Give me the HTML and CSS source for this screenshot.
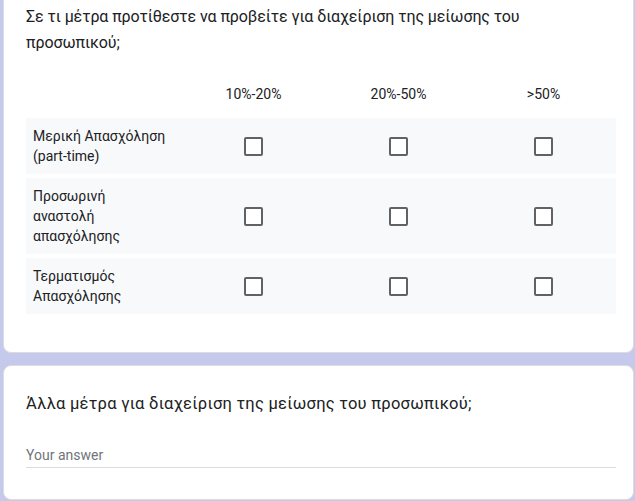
FILE: index.html
```html
<!DOCTYPE html>
<html lang="el">
<head>
<meta charset="utf-8">
<title>Form</title>
<link rel="stylesheet" href="styles.css">
</head>
<body>
<div class="card card-top">
  <div class="q-title">Σε τι μέτρα προτίθεστε να προβείτε για διαχείριση της μείωσης του προσωπικού;</div>
  <div class="grid">
    <div class="grid-head">
      <div></div>
      <div class="col-label">10%-20%</div>
      <div class="col-label">20%-50%</div>
      <div class="col-label">&gt;50%</div>
    </div>
    <div class="grid-row">
      <div class="row-label">Μερική Απασχόληση (part-time)</div>
      <div class="cell"><span class="box"></span></div>
      <div class="cell"><span class="box"></span></div>
      <div class="cell"><span class="box"></span></div>
    </div>
    <div class="grid-row">
      <div class="row-label">Προσωρινή αναστολή απασχόλησης</div>
      <div class="cell"><span class="box"></span></div>
      <div class="cell"><span class="box"></span></div>
      <div class="cell"><span class="box"></span></div>
    </div>
    <div class="grid-row">
      <div class="row-label">Τερματισμός Απασχόλησης</div>
      <div class="cell"><span class="box"></span></div>
      <div class="cell"><span class="box"></span></div>
      <div class="cell"><span class="box"></span></div>
    </div>
  </div>
</div>
<div class="card card-bottom">
  <div class="q-title q-title-2">Άλλα μέτρα για διαχείριση της μείωσης του προσωπικού;</div>
  <div class="answer">Your answer</div>
</div>
</body>
</html>
```
FILE: styles.css
```css
html, body {
  margin: 0;
  padding: 0;
}
body {
  background: #c5c9ec;
  font-family: Roboto, "Noto Sans", "Liberation Sans", sans-serif;
  color: #202124;
  overflow: hidden;
  height: 501px;
}
.card {
  background: #fff;
  border: 1px solid #dadce0;
  margin: 0 1px 0 3px;
  padding: 0 17px 0 22px;
}
.card-top {
  border-top: none;
  border-radius: 0 0 8px 8px;
  padding-top: 4px;
  padding-bottom: 38px;
}
.card-bottom {
  margin-top: 12px;
  border-radius: 8px;
  padding-top: 26px;
  padding-bottom: 31px;
}
.q-title {
  font-size: 16px;
  line-height: 26px;
  letter-spacing: -0.1px;
  color: #202124;
}
.q-title-2 {
  font-size: 16.5px;
  line-height: 24px;
  letter-spacing: 0.25px;
}
.grid {
  margin-top: 22px;
  display: flex;
  flex-direction: column;
  gap: 4px;
}
.grid-head, .grid-row {
  display: grid;
  grid-template-columns: 155px 1fr 1fr 1fr;
  align-items: center;
}
.grid-head {
  height: 32px;
  margin-bottom: 4px;
}
.col-label {
  text-align: center;
  font-size: 14px;
  line-height: 20px;
  color: #202124;
}
.grid-row {
  background: #f8f9fa;
  padding: 8px 0;
}
.row-label {
  font-size: 14px;
  line-height: 20px;
  padding-left: 7px;
  padding-right: 13px;
  color: #202124;
}
.cell {
  display: flex;
  justify-content: center;
  align-items: center;
}
.box {
  display: block;
  width: 15px;
  height: 15px;
  border: 2px solid #5f6368;
  border-radius: 2px;
  background: #fff;
}
.answer {
  margin-top: 29px;
  font-size: 14px;
  line-height: 20px;
  color: #70757a;
  padding-bottom: 2px;
  border-bottom: 1px solid #dadce0;
}
```
